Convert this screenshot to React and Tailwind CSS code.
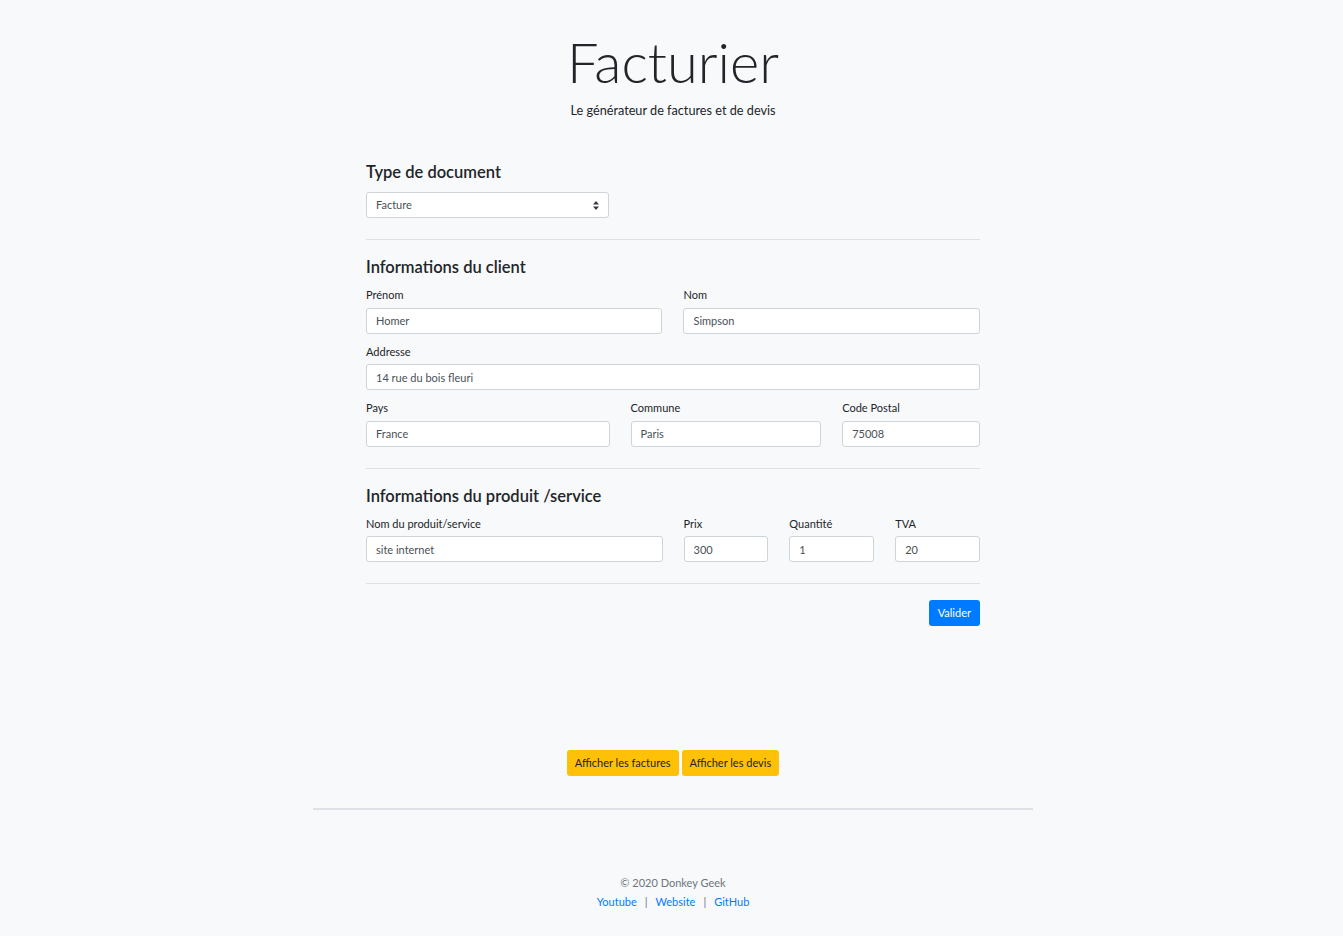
import { useState } from "react";

const inputCls =
  "w-full h-[26px] px-[9px] bg-white border border-[#ced4da] rounded-[3px] text-[11px] text-[#495057] outline-none";

function Field({ label, value, className = "" }) {
  return (
    <div className={className}>
      <label className="block text-[11px] text-[#212529] mb-[4px] leading-[16px]">{label}</label>
      <input className={inputCls} defaultValue={value} />
    </div>
  );
}

export default function App() {
  const [type, setType] = useState("Facture");

  return (
    <div className="min-h-screen bg-[#f8f9fa] text-[#212529] pl-[3px]" style={{ fontFamily: '"Segoe UI", Lato, sans-serif' }}>
      {/* Header */}
      <header className="pt-[28px] text-center">
        <h1 className="text-[56px] font-light leading-[67px] text-[#212529]">Facturier</h1>
        <p className="text-[12.7px] leading-[18px] mt-[6px]">Le générateur de factures et de devis</p>
      </header>

      <main className="w-[614px] mx-auto mt-[43px]">
        {/* Type de document */}
        <h5 className="text-[16.5px] font-semibold leading-[20px] mb-[10px]">Type de document</h5>
        <div className="relative w-[243px] h-[26px] bg-white border border-[#ced4da] rounded-[3px] flex items-center px-[9px] text-[11px] text-[#495057]">
          <span className="flex-1">{type}</span>
          <svg width="6" height="9" viewBox="0 0 6 9" className="text-[#343a40]">
            <path d="M3 0 L6 3.5 H0 Z M3 9 L0 5.5 H6 Z" fill="currentColor" />
          </svg>
          <select
            className="absolute inset-0 opacity-0"
            value={type}
            onChange={(e) => setType(e.target.value)}
          >
            <option>Facture</option>
            <option>Devis</option>
          </select>
        </div>

        <hr className="border-0 border-t border-[#dee2e6] mt-[21px] mb-[17px]" />

        {/* Client */}
        <h5 className="text-[16.5px] font-semibold leading-[20px] mb-[10px]">Informations du client</h5>
        <div className="grid grid-cols-12 gap-x-[21px] gap-y-[10px]">
          <Field className="col-span-6" label="Prénom" value="Homer" />
          <Field className="col-span-6" label="Nom" value="Simpson" />
          <Field className="col-span-12" label="Addresse" value="14 rue du bois fleuri" />
          <Field className="col-span-5" label="Pays" value="France" />
          <Field className="col-span-4" label="Commune" value="Paris" />
          <Field className="col-span-3" label="Code Postal" value="75008" />
        </div>

        <hr className="border-0 border-t border-[#dee2e6] mt-[21px] mb-[17px]" />

        {/* Produit */}
        <h5 className="text-[16.5px] font-semibold leading-[20px] mb-[10px]">Informations du produit /service</h5>
        <div className="grid grid-cols-12 gap-x-[21px]">
          <Field className="col-span-6" label="Nom du produit/service" value="site internet" />
          <Field className="col-span-2" label="Prix" value="300" />
          <Field className="col-span-2" label="Quantité" value="1" />
          <Field className="col-span-2" label="TVA" value="20" />
        </div>

        <hr className="border-0 border-t border-[#dee2e6] mt-[21px] mb-[16px]" />

        <div className="flex justify-end">
          <button className="h-[26px] px-[9px] bg-[#007bff] text-white text-[11px] rounded-[3px]">Valider</button>
        </div>
      </main>

      {/* Listes */}
      <div className="flex justify-center gap-[3px] mt-[124px]">
        <button className="h-[26px] px-[8px] bg-[#ffc107] text-[#212529] text-[11px] rounded-[3px]">Afficher les factures</button>
        <button className="h-[26px] px-[8px] bg-[#ffc107] text-[#212529] text-[11px] rounded-[3px]">Afficher les devis</button>
      </div>

      <hr className="w-[720px] mx-auto border-0 border-t-2 border-[#dee2e6] mt-[32px]" />

      {/* Footer */}
      <footer className="text-center text-[11px] leading-[19px] text-[#6c757d] pt-[63px] pb-[26px]">
        <p>© 2020 Donkey Geek</p>
        <p>
          <a href="#" className="text-[#007bff]">Youtube</a>
          <span className="mx-[8px]">|</span>
          <a href="#" className="text-[#007bff]">Website</a>
          <span className="mx-[8px]">|</span>
          <a href="#" className="text-[#007bff]">GitHub</a>
        </p>
      </footer>
    </div>
  );
}
